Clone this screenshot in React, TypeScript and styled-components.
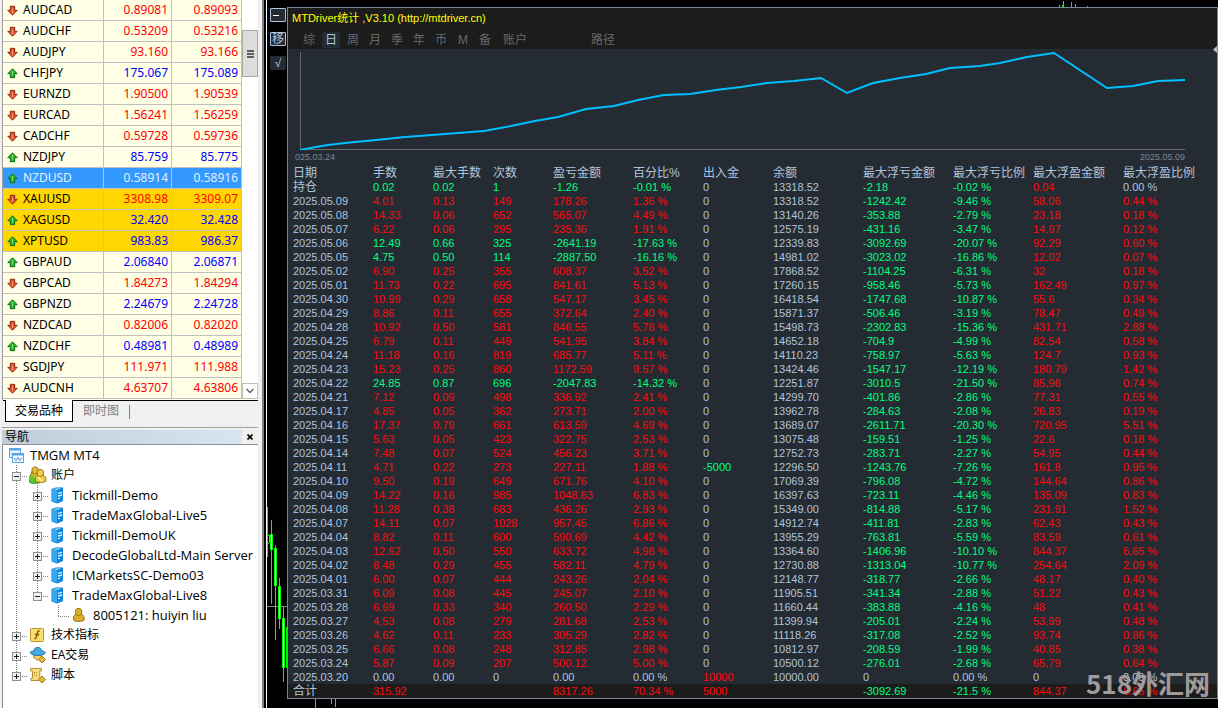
import React from "react";
import styled, { createGlobalStyle } from "styled-components";

const GlobalStyle = createGlobalStyle`
  * { box-sizing: border-box; }
  body { margin: 0; background: #000; }
  button { margin: 0; padding: 0; border: 0; background: none; font: inherit; color: inherit; cursor: pointer; }
  svg { display: block; }
`;

const ui = `"Noto Sans", "Noto Sans CJK SC", sans-serif`;
const treeFont = `"Open Sans", "Noto Sans CJK SC", sans-serif`;
const mono = `"Liberation Sans", "Noto Sans CJK SC", sans-serif`;

/* ---------- data ---------- */

type Quote = { symbol: string; bid: string; ask: string; up?: boolean; tone?: "selected" | "gold" };

const quotes: Quote[] = [
  { symbol: "AUDCAD", bid: "0.89081", ask: "0.89093" },
  { symbol: "AUDCHF", bid: "0.53209", ask: "0.53216" },
  { symbol: "AUDJPY", bid: "93.160", ask: "93.166" },
  { symbol: "CHFJPY", bid: "175.067", ask: "175.089", up: true },
  { symbol: "EURNZD", bid: "1.90500", ask: "1.90539" },
  { symbol: "EURCAD", bid: "1.56241", ask: "1.56259" },
  { symbol: "CADCHF", bid: "0.59728", ask: "0.59736" },
  { symbol: "NZDJPY", bid: "85.759", ask: "85.775", up: true },
  { symbol: "NZDUSD", bid: "0.58914", ask: "0.58916", up: true, tone: "selected" },
  { symbol: "XAUUSD", bid: "3308.98", ask: "3309.07", tone: "gold" },
  { symbol: "XAGUSD", bid: "32.420", ask: "32.428", up: true, tone: "gold" },
  { symbol: "XPTUSD", bid: "983.83", ask: "986.37", up: true, tone: "gold" },
  { symbol: "GBPAUD", bid: "2.06840", ask: "2.06871", up: true },
  { symbol: "GBPCAD", bid: "1.84273", ask: "1.84294" },
  { symbol: "GBPNZD", bid: "2.24679", ask: "2.24728", up: true },
  { symbol: "NZDCAD", bid: "0.82006", ask: "0.82020" },
  { symbol: "NZDCHF", bid: "0.48981", ask: "0.48989", up: true },
  { symbol: "SGDJPY", bid: "111.971", ask: "111.988" },
  { symbol: "AUDCNH", bid: "4.63707", ask: "4.63806" },
];

type Guide = "line" | "blank" | "plus" | "minus" | "plusEnd" | "minusEnd" | "elbow";
type IconName = "terminal" | "users" | "server" | "user" | "func" | "ea" | "script";

const tree: { label: string; icon: IconName; guides: Guide[]; chinese?: boolean }[] = [
  { label: "TMGM MT4", icon: "terminal", guides: [] },
  { label: "账户", icon: "users", guides: ["minus"], chinese: true },
  { label: "Tickmill-Demo", icon: "server", guides: ["line", "plus"] },
  { label: "TradeMaxGlobal-Live5", icon: "server", guides: ["line", "plus"] },
  { label: "Tickmill-DemoUK", icon: "server", guides: ["line", "plus"] },
  { label: "DecodeGlobalLtd-Main Server", icon: "server", guides: ["line", "plus"] },
  { label: "ICMarketsSC-Demo03", icon: "server", guides: ["line", "plus"] },
  { label: "TradeMaxGlobal-Live8", icon: "server", guides: ["line", "minusEnd"] },
  { label: "8005121: huiyin liu", icon: "user", guides: ["line", "blank", "elbow"] },
  { label: "技术指标", icon: "func", guides: ["plus"], chinese: true },
  { label: "EA交易", icon: "ea", guides: ["plus"], chinese: true },
  { label: "脚本", icon: "script", guides: ["plusEnd"], chinese: true },
];

const headings = ["日期", "手数", "最大手数", "次数", "盈亏金额", "百分比%", "出入金", "余额", "最大浮亏金额", "最大浮亏比例", "最大浮盈金额", "最大浮盈比例"];
const columnWidths = [80, 60, 60, 60, 80, 70, 70, 90, 90, 80, 90];

/* date | lots | max lots | trades | profit | % | in/out | balance | max loss | max loss % | max gain | max gain % */
const records = `持仓|0.02|0.02|1|-1.26|-0.01|0|13318.52|-2.18|-0.02|0.04|0.00
2025.05.09|4.01|0.13|149|178.26|1.36|0|13318.52|-1242.42|-9.46|58.06|0.44
2025.05.08|14.33|0.06|652|565.07|4.49|0|13140.26|-353.88|-2.79|23.18|0.18
2025.05.07|6.22|0.06|295|235.36|1.91|0|12575.19|-431.16|-3.47|14.97|0.12
2025.05.06|12.49|0.66|325|-2641.19|-17.63|0|12339.83|-3092.69|-20.07|92.29|0.60
2025.05.05|4.75|0.50|114|-2887.50|-16.16|0|14981.02|-3023.02|-16.86|12.02|0.07
2025.05.02|6.90|0.25|355|608.37|3.52|0|17868.52|-1104.25|-6.31|32|0.18
2025.05.01|11.73|0.22|695|841.61|5.13|0|17260.15|-958.46|-5.73|162.49|0.97
2025.04.30|10.99|0.29|658|547.17|3.45|0|16418.54|-1747.68|-10.87|55.6|0.34
2025.04.29|8.86|0.11|655|372.64|2.40|0|15871.37|-506.46|-3.19|78.47|0.49
2025.04.28|10.92|0.50|581|846.55|5.78|0|15498.73|-2302.83|-15.36|431.71|2.88
2025.04.25|6.79|0.11|449|541.95|3.84|0|14652.18|-704.9|-4.99|82.54|0.58
2025.04.24|11.18|0.16|819|685.77|5.11|0|14110.23|-758.97|-5.63|124.7|0.93
2025.04.23|15.23|0.25|860|1172.59|9.57|0|13424.46|-1547.17|-12.19|180.79|1.42
2025.04.22|24.85|0.87|696|-2047.83|-14.32|0|12251.87|-3010.5|-21.50|85.96|0.74
2025.04.21|7.12|0.09|498|336.92|2.41|0|14299.70|-401.86|-2.86|77.31|0.55
2025.04.17|4.85|0.05|362|273.71|2.00|0|13962.78|-284.63|-2.08|26.83|0.19
2025.04.16|17.37|0.79|661|613.59|4.69|0|13689.07|-2611.71|-20.30|720.95|5.51
2025.04.15|5.63|0.05|423|322.75|2.53|0|13075.48|-159.51|-1.25|22.6|0.18
2025.04.14|7.48|0.07|524|456.23|3.71|0|12752.73|-283.71|-2.27|54.95|0.44
2025.04.11|4.71|0.22|273|227.11|1.88|-5000|12296.50|-1243.76|-7.26|161.8|0.95
2025.04.10|9.50|0.19|649|671.76|4.10|0|17069.39|-796.08|-4.72|144.64|0.86
2025.04.09|14.22|0.16|985|1048.63|6.83|0|16397.63|-723.11|-4.46|135.09|0.83
2025.04.08|11.28|0.38|683|436.26|2.93|0|15349.00|-814.88|-5.17|231.91|1.52
2025.04.07|14.11|0.07|1028|957.45|6.86|0|14912.74|-411.81|-2.83|62.43|0.43
2025.04.04|8.82|0.11|600|590.69|4.42|0|13955.29|-763.81|-5.59|83.59|0.61
2025.04.03|12.62|0.50|550|633.72|4.98|0|13364.60|-1406.96|-10.10|844.37|6.65
2025.04.02|8.48|0.29|455|582.11|4.79|0|12730.88|-1313.04|-10.77|254.64|2.09
2025.04.01|6.00|0.07|444|243.26|2.04|0|12148.77|-318.77|-2.66|48.17|0.40
2025.03.31|6.09|0.08|445|245.07|2.10|0|11905.51|-341.34|-2.88|51.22|0.43
2025.03.28|6.69|0.33|340|260.50|2.29|0|11660.44|-383.88|-4.16|48|0.41
2025.03.27|4.53|0.08|279|281.68|2.53|0|11399.94|-205.01|-2.24|53.99|0.48
2025.03.26|4.62|0.11|233|305.29|2.82|0|11118.26|-317.08|-2.52|93.74|0.86
2025.03.25|6.66|0.08|248|312.85|2.98|0|10812.97|-208.59|-1.99|40.85|0.38
2025.03.24|5.87|0.09|207|500.12|5.00|0|10500.12|-276.01|-2.68|65.79|0.64
2025.03.20|0.00|0.00|0|0.00|0.00|10000|10000.00|0|0.00|0|0.00`.split("\n").map((r) => r.split("|"));

const totals = ["合计", "315.92", "", "", "8317.26", "70.34", "5000", "", "-3092.69", "-21.5", "844.37", "6.65"];

const neutral = "#b0c4de";
const signTone = (n: number) => (n > 0 ? "#ff0a0a" : n < 0 ? "#00ff7f" : neutral);

/* Lots and trade counts take the colour of the day's profit. */
function cellTone(row: string[], col: number) {
  if (col === 0 || col === 7) return neutral;
  return signTone(Number(col < 4 ? row[4] : row[col]));
}
const withUnit = (v: string, col: number) => (v && (col === 5 || col === 9 || col === 11) ? `${v} %` : v);

/* ---------- left side ---------- */

const Page = styled.div`
  display: flex;
  min-height: 100vh;
  background: #000;
`;
const Sidebar = styled.aside`
  flex: none;
  display: flex;
  flex-direction: column;
  width: 267px;
  background: #f0f0f0;
  font: 12px/20px ${ui};
  color: #000;
  border-right: 1px solid #fff;
  box-shadow: inset -2px 0 #000, inset -4px 0 #808080;
  padding: 0 8px 0 2px;
`;
const Market = styled.section`
  display: flex;
  height: 400px;
  overflow: hidden;
  border-left: 1px solid #a0a0a0;
  background: #ffffe6;
`;
const QuoteTable = styled.table`
  flex: 1;
  table-layout: fixed;
  border-collapse: separate;
  border-spacing: 0;
  height: 399px;
`;
const QuoteRow = styled.tr<{ $tone?: string }>`
  background: ${(p) => (p.$tone === "selected" ? "#3399ff" : p.$tone === "gold" ? "#ffd700" : "#ffffe6")};
`;
const QuoteCell = styled.td<{ $color?: string }>`
  height: 21px;
  padding: 0 3px;
  border: solid #c0c0c0;
  border-width: 0 1px 1px 0;
  color: ${(p) => p.$color ?? "#000"};
  text-align: right;
  line-height: 18px;
`;
const SymbolCell = styled(QuoteCell)`
  text-align: left;
  padding-left: 4px;
`;
const Symbol = styled.span`
  display: flex;
  align-items: center;
  gap: 5px;
`;
const ScrollTrack = styled.div`
  flex: none;
  display: flex;
  flex-direction: column;
  justify-content: space-between;
  width: 16px;
  height: 399px;
  padding-top: 30px;
  background: #fff;
`;
const Thumb = styled.div`
  display: flex;
  flex-direction: column;
  justify-content: center;
  align-items: center;
  gap: 1px;
  height: 47px;
  border: 1px solid #a8a8a8;
  background: #dcdcdc;
  i { width: 7px; height: 2px; background: #606060; }
`;
const ScrollDown = styled.button`
  display: flex;
  justify-content: center;
  align-items: center;
  height: 16px;
  border: 1px solid #c0c0c0;
`;
const TabBar = styled.div`
  display: flex;
  height: 24px;
  margin-left: 1px;
  padding-left: 2px;
  border-top: 1px solid #000;
`;
const Tab = styled.button<{ $active?: boolean }>`
  height: ${(p) => (p.$active ? "22px" : "19px")};
  margin-top: ${(p) => (p.$active ? "-1px" : "0")};
  padding: 0 ${(p) => (p.$active ? "9px" : "10px")};
  border: ${(p) => (p.$active ? "solid #000" : "solid #808080")};
  border-width: ${(p) => (p.$active ? "0 1px 1px 1px" : "0")};
  background: ${(p) => (p.$active ? "#fff" : "transparent")};
  color: ${(p) => (p.$active ? "#000" : "#808080")};
`;
const TabDivider = styled.i`
  width: 1px;
  height: 14px;
  margin-top: 4px;
  background: #808080;
`;
const NavHeader = styled.header`
  display: flex;
  align-items: center;
  height: 17px;
  padding: 2px 2px 0 0;
  margin-top: 3px;
  border-top: 1px solid #a0a0a0;
`;
const NavTitle = styled.h2`
  flex: 1;
  height: 14px;
  margin: 0 2px 0 0;
  padding-left: 3px;
  background: linear-gradient(90deg, #bfcddb, #d7e4f2);
  font: 12px/13px ${ui};
`;
const CloseButton = styled.button`
  padding: 3px;
`;
const Tree = styled.ul`
  flex: 1;
  margin: 0;
  padding: 0 0 0 3px;
  border: solid #909090;
  border-width: 1px 0 0 1px;
  background: #fff;
  list-style: none;
`;
const TreeRow = styled.li<{ $chinese?: boolean }>`
  display: flex;
  height: 20px;
  font-family: ${treeFont};
  font-size: ${(p) => (p.$chinese ? "12px" : "13px")};
  white-space: nowrap;
`;
const TreeIcon = styled.span`
  flex: none;
  display: flex;
  align-items: center;
  width: 24px;
  padding-left: 2px;
`;

function Arrow({ up }: { up?: boolean }) {
  return (
    <svg width="11" height="11" viewBox="0 0 11 11" aria-hidden="true">
      <g transform={up ? undefined : "rotate(180 5.5 5.5)"}>
        <path d="M5.5 .8 10.2 5.7H7.7V9.7H3.3V5.7H.8Z" fill={up ? "#28b428" : "#e8522a"} stroke={up ? "#0a6e14" : "#8c2810"} />
        <path d="M5.5 2.6V7.5" stroke={up ? "#7be06c" : "#ff9a70"} />
      </g>
    </svg>
  );
}

function GuideCell({ kind }: { kind: Guide }) {
  const box = kind.startsWith("plus") || kind.startsWith("minus");
  const end = kind === "elbow" || kind.endsWith("End");
  return (
    <Guides width="21" height="20" viewBox="0 0 21 20" aria-hidden="true">
      {kind !== "blank" && <path d={end ? "M10.5 0V11" : "M10.5 0V20"} stroke="#808080" strokeDasharray="1 1" />}
      {(box || kind === "elbow") && <path d="M10 11.5H22" stroke="#808080" strokeDasharray="1 1" />}
      {box && (
        <>
          <rect x="6.5" y="7.5" width="8" height="8" fill="#f0f0f0" stroke="#909090" />
          <path d={kind.startsWith("plus") ? "M8 11.5H13M10.5 9V14" : "M8 11.5H13"} stroke="#202020" />
        </>
      )}
    </Guides>
  );
}
const Guides = styled.svg`
  flex: none;
`;

const person = (x: number, y: number, fill: string, edge: string) => (
  <g transform={`translate(${x} ${y})`} fill={fill} stroke={edge} strokeWidth=".9">
    <path d="M.6 12.2C-.2 9 1.2 6.8 3.4 6H7.8C10.4 6.8 11.8 9.2 11 12.2 9.8 13.8 1.6 13.8 .6 12.2Z" />
    <path d="M5.6 .5C8.2.5 9 2.1 8.8 4.2 8.4 6.4 7.2 7.6 5.6 7.6S2.8 6.4 2.4 4.2C2.2 2.1 3 .5 5.6.5Z" />
  </g>
);

function NodeIcon({ name }: { name: IconName }) {
  return (
    <svg width="18" height="18" viewBox="0 0 18 18" aria-hidden="true">
      {name === "terminal" && (
        <>
          <rect x="1.5" y="2.5" width="11" height="9" fill="#eaf5ff" stroke="#58a5e8" />
          <path d="M1 3.5H13" stroke="#58a5e8" strokeWidth="2" />
          <path d="M3 8.5 4.5 7 6 9" stroke="#448cd8" fill="none" />
          <rect x="4.5" y="7.5" width="11" height="9" fill="#f4faff" stroke="#58a5e8" />
          <path d="M4 8.5H16" stroke="#58a5e8" strokeWidth="2" />
          <path d="M6 12 8 14.5 10 11.5 12 14.5 14 11.5" stroke="#448cd8" fill="none" />
        </>
      )}
      {name === "users" && (
        <>
          {person(0, 4, "#52cc2c", "#238a14")}
          {person(.5, .5, "#e6b930", "#8a6508")}
          <path d="M0 13C0 10 1.5 9 4 9L6.5 15.5H2Q.5 15 0 13Z" fill="#52cc2c" />
          {person(5.8, 3, "#f0cc4c", "#8a6508")}
          <path d="M9.5 11 13 15.5" stroke="#fff3b0" strokeWidth="1.5" />
        </>
      )}
      {name === "server" && (
        <>
          <path d="M1.5 3 6 1.5H13V15L7 17.5 1.5 15.5Z" fill="#0878c8" />
          <path d="M2 3.3 7 4.5V17L2 15.2Z" fill="#35a8f4" />
          <path d="M7 4.5 12.5 3V14.8L7 17Z" fill="#1088dc" />
          <path d="M8 7.4 12 6.4M8 10 12 9M8 12.6 10 12.1" stroke="#d4f2ff" strokeWidth="1.3" />
          <path d="M2.5 3.2 6.5 2.2H12.3L7 3.9Z" fill="#8ad6ff" />
        </>
      )}
      {name === "user" && person(2, 2, "#dcb02c", "#8a6508")}
      {name === "func" && (
        <>
          <rect x="1.5" y="2.5" width="13" height="13" rx="1" fill="#f8dc6c" stroke="#bc922c" />
          <path d="M10.8 5.2C8.8 4.3 8.4 6 8 8.5S7.2 13 5.2 12.6M5.8 8.5H10.2" stroke="#7a5908" strokeWidth="1.4" fill="none" />
        </>
      )}
      {name === "ea" && (
        <>
          <path d="M5 8.5H12L12.5 11 9 14.5 4.5 11.5Z" fill="#f1cf58" stroke="#b58a20" />
          <path d="M1 6.5C2 5 4 5.3 5 5 5.2 2 6.5 1.5 9 1.5S12.3 2.5 12.5 5C14 5 16 5.4 16.5 6.8 15 9 12 9.5 9 9.5S2.5 9 1 6.5Z" fill="#46a9e0" stroke="#2578b0" />
          <path d="M13 10 16.5 13.5 13 17 9.5 13.5Z" fill="#e5b43a" stroke="#a67c18" />
        </>
      )}
      {name === "script" && (
        <>
          <path d="M1.5 2.5H12.5V5H10.8V11.5H12.5V14.5H2V12H3.5V5H1.5Z" fill="#f6dc7c" stroke="#b58f2c" />
          <path d="M5 6.5H9M5 9H8" stroke="#a67c18" strokeDasharray="1 1" />
          <path d="M13 10 16.5 13.5 13 17 9.5 13.5Z" fill="#e5b43a" stroke="#a67c18" />
        </>
      )}
    </svg>
  );
}

/* ---------- chart window and statistics panel ---------- */

const ChartWindow = styled.main`
  position: relative;
  flex: 1;
  min-width: 0;
  display: flex;
  align-items: flex-start;
  padding: 7px 0 9px;
  color: ${neutral};
  font: 12px/14px ${mono};
`;
const Candles = styled.svg`
  position: absolute;
  left: 0;
  bottom: 0;
`;
const VolumeTicks = styled.svg`
  position: absolute;
  top: 0;
  right: 130px;
`;
const ToolStrip = styled.nav`
  flex: none;
  display: flex;
  flex-direction: column;
  align-items: center;
  gap: 10px;
  width: 20px;
  padding: 1px 0 0 2px;
`;
const ToolButton = styled.button<{ $plain?: boolean }>`
  width: 16px;
  height: 14px;
  border: 1px solid ${(p) => (p.$plain ? "#242b33" : neutral)};
  border-radius: 1px;
  background: #242b33;
  line-height: 11px;
`;
const Panel = styled.section`
  position: relative;
  flex: 1;
  min-width: 0;
  border: 1px solid #778899;
  background: #242b33;
`;
const PanelHeader = styled.header`
  height: 41px;
  background: #1c1c1c;
`;
const PanelTitle = styled.h1`
  margin: 0;
  padding: 2px 4px;
  color: #ffff00;
  font: 11px/16px ${mono};
`;
const Periods = styled.div`
  display: flex;
  gap: 4px;
  padding: 4px 0 0 12px;
`;
const Period = styled.button<{ $active?: boolean; $wide?: boolean; $apart?: boolean }>`
  width: ${(p) => (p.$wide ? "34px" : "18px")};
  height: 16px;
  margin-left: ${(p) => (p.$apart ? "50px" : "0")};
  border-radius: 2px;
  background: ${(p) => (p.$active ? "#242b33" : "transparent")};
  color: ${(p) => (p.$active ? neutral : "#696969")};
  line-height: 16px;
`;
const Plot = styled.svg`
  width: 100%;
  height: 101px;
`;
const AxisLabels = styled.div`
  display: flex;
  justify-content: space-between;
  height: 16px;
  padding: 0 32px 0 7px;
  color: #778899;
  font-size: 9px;
  line-height: 14px;
`;
const Stats = styled.table`
  width: 100%;
  table-layout: fixed;
  border-collapse: collapse;
  white-space: nowrap;
`;
const HeadCell = styled.th`
  height: 14px;
  padding: 0 0 0 5px;
  text-align: left;
  font-weight: normal;
  line-height: 14px;
`;
const Cell = styled.td<{ $color: string; $label?: boolean }>`
  height: 14px;
  padding: 0 0 0 5px;
  color: ${(p) => p.$color};
  font-size: ${(p) => (p.$label ? "12px" : "11px")};
  line-height: 14px;
`;
const TotalRow = styled.tr`
  background: #1c1c1c;
`;
const EdgeMark = styled.svg`
  position: absolute;
  right: 0;
  top: 38px;
`;
const Watermark = styled.span`
  position: absolute;
  right: 7px;
  bottom: -1px;
  color: #a09b9b;
  font: bold 26px/32px "Noto Sans CJK SC", sans-serif;
`;

const candles = [
  { x: 4, high: 520, low: 604, open: 534, close: 550 },
  { x: 8, high: 545, low: 640, open: 548, close: 586 },
  { x: 12, high: 578, low: 629, open: 586, close: 619 },
  { x: 16, high: 606, low: 682, open: 618, close: 668 },
];

const periods = ["综", "日", "周", "月", "季", "年", "币", "M", "备", "账户", "路径"];

const equity =
  "12,101 28,98 40,96 57,94 88,91 117,88 144,86 170,84 196,82 223,77 247,72 270,68 298,60 326,57 350,51 376,46 402,45 428,41 453,38 479,34 506,32 533,29 559,44 585,34 612,29 638,25 662,19 692,17 712,14 739,8 766,4 819,39 845,37 870,32 897,31";

export default function App() {
  return (
    <>
      <GlobalStyle />
      <Page>
        <Sidebar>
          <Market>
            <QuoteTable>
              <colgroup>
                <col style={{ width: 101 }} />
                <col style={{ width: 68 }} />
                <col style={{ width: 70 }} />
              </colgroup>
              <tbody>
                {quotes.map((q) => {
                  const color = q.tone === "selected" ? "#e4f0ff" : q.up ? "#0000ff" : "#ff0000";
                  return (
                    <QuoteRow key={q.symbol} $tone={q.tone}>
                      <SymbolCell $color={q.tone === "selected" ? "#e4f0ff" : undefined}>
                        <Symbol><Arrow up={q.up} />{q.symbol}</Symbol>
                      </SymbolCell>
                      <QuoteCell $color={color}>{q.bid}</QuoteCell>
                      <QuoteCell $color={color}>{q.ask}</QuoteCell>
                    </QuoteRow>
                  );
                })}
              </tbody>
            </QuoteTable>
            <ScrollTrack>
              <Thumb><i /><i /><i /></Thumb>
              <ScrollDown aria-label="Scroll down">
                <svg width="8" height="6" viewBox="0 0 8 6"><path d="M.5 1 4 4.5 7.5 1" stroke="#606060" strokeWidth="1.4" fill="none" /></svg>
              </ScrollDown>
            </ScrollTrack>
          </Market>
          <TabBar>
            <Tab $active>交易品种</Tab>
            <Tab>即时图</Tab>
            <TabDivider />
          </TabBar>
          <NavHeader>
            <NavTitle>导航</NavTitle>
            <CloseButton aria-label="Close">
              <svg width="6" height="6" viewBox="0 0 6 6"><path d="M.5 .5 5.5 5.5M5.5 .5 .5 5.5" stroke="#000" strokeWidth="1.6" /></svg>
            </CloseButton>
          </NavHeader>
          <Tree>
            {tree.map((n) => (
              <TreeRow key={n.label} $chinese={n.chinese}>
                {n.guides.map((g, i) => <GuideCell key={i} kind={g} />)}
                <TreeIcon><NodeIcon name={n.icon} /></TreeIcon>
                {n.label}
              </TreeRow>
            ))}
          </Tree>
        </Sidebar>

        <ChartWindow>
          <Candles width="80" height="208" viewBox="0 500 80 208" shapeRendering="crispEdges" aria-hidden="true">
            <path d="M0 606.5H20" stroke="#778899" />
            <path d="M.5 507V557M2.5 535V543M0 535.5H2M0 543.5H2" stroke="#00ff00" />
            {candles.map((c) => (
              <g key={c.x}>
                <path d={`M${c.x + 0.5} ${c.high}V${c.low}`} stroke="#00ff00" />
                <rect x={c.x - 0.5} y={c.open + 0.5} width="2" height={c.close - c.open - 1} fill="#fff" stroke="#00ff00" />
              </g>
            ))}
            <path d="M19.5 627V668M48.5 698V708M64.5 698V704M68.5 698V707" stroke="#00ff00" />
          </Candles>
          <VolumeTicks width="30" height="8" shapeRendering="crispEdges" aria-hidden="true">
            <path d="M1.5 5V8M4.5 5V8M5.5 1V8M13.5 2V8M17.5 4V8M29.5 6V8" stroke="#00ff00" />
          </VolumeTicks>
          <ToolStrip>
            <ToolButton aria-label="Minimise">
              <svg width="12" height="10" viewBox="0 0 12 10"><path d="M2 5.5H8" stroke="#fff" /></svg>
            </ToolButton>
            <ToolButton>移</ToolButton>
            <ToolButton $plain>√</ToolButton>
          </ToolStrip>
          <Panel>
            <PanelHeader>
              <PanelTitle>MTDriver统计 ,V3.10 (http://mtdriver.cn)</PanelTitle>
              <Periods>
                {periods.map((p) => (
                  <Period key={p} $active={p === "日"} $wide={p.length > 1} $apart={p === "路径"}>{p}</Period>
                ))}
              </Periods>
            </PanelHeader>
            <Plot viewBox="0 0 929 101" preserveAspectRatio="none" role="img" aria-label="Balance curve">
              <path d="M12.5 3V100.5H897" stroke="#696969" fill="none" shapeRendering="crispEdges" />
              <polyline points={equity} fill="none" stroke="#00bfff" strokeWidth="2" />
            </Plot>
            <AxisLabels><span>025.03.24</span><span>2025.05.09</span></AxisLabels>
            <Stats>
              <colgroup>
                {columnWidths.map((w, i) => <col key={i} style={{ width: w }} />)}
                <col />
              </colgroup>
              <thead>
                <tr>{headings.map((h) => <HeadCell key={h}>{h}</HeadCell>)}</tr>
              </thead>
              <tbody>
                {records.map((r) => (
                  <tr key={r[0]}>
                    {r.map((v, i) => <Cell key={i} $color={cellTone(r, i)} $label={v === "持仓"}>{withUnit(v, i)}</Cell>)}
                  </tr>
                ))}
              </tbody>
              <tfoot>
                <TotalRow>
                  {totals.map((v, i) => <Cell key={i} $color={cellTone(totals, i)} $label={i === 0}>{withUnit(v, i)}</Cell>)}
                </TotalRow>
              </tfoot>
            </Stats>
            <EdgeMark width="4" height="7" aria-hidden="true"><path d="M4 0V7L0 3.5Z" fill="#c0c0c0" /></EdgeMark>
            <Watermark>518外汇网</Watermark>
          </Panel>
        </ChartWindow>
      </Page>
    </>
  );
}
